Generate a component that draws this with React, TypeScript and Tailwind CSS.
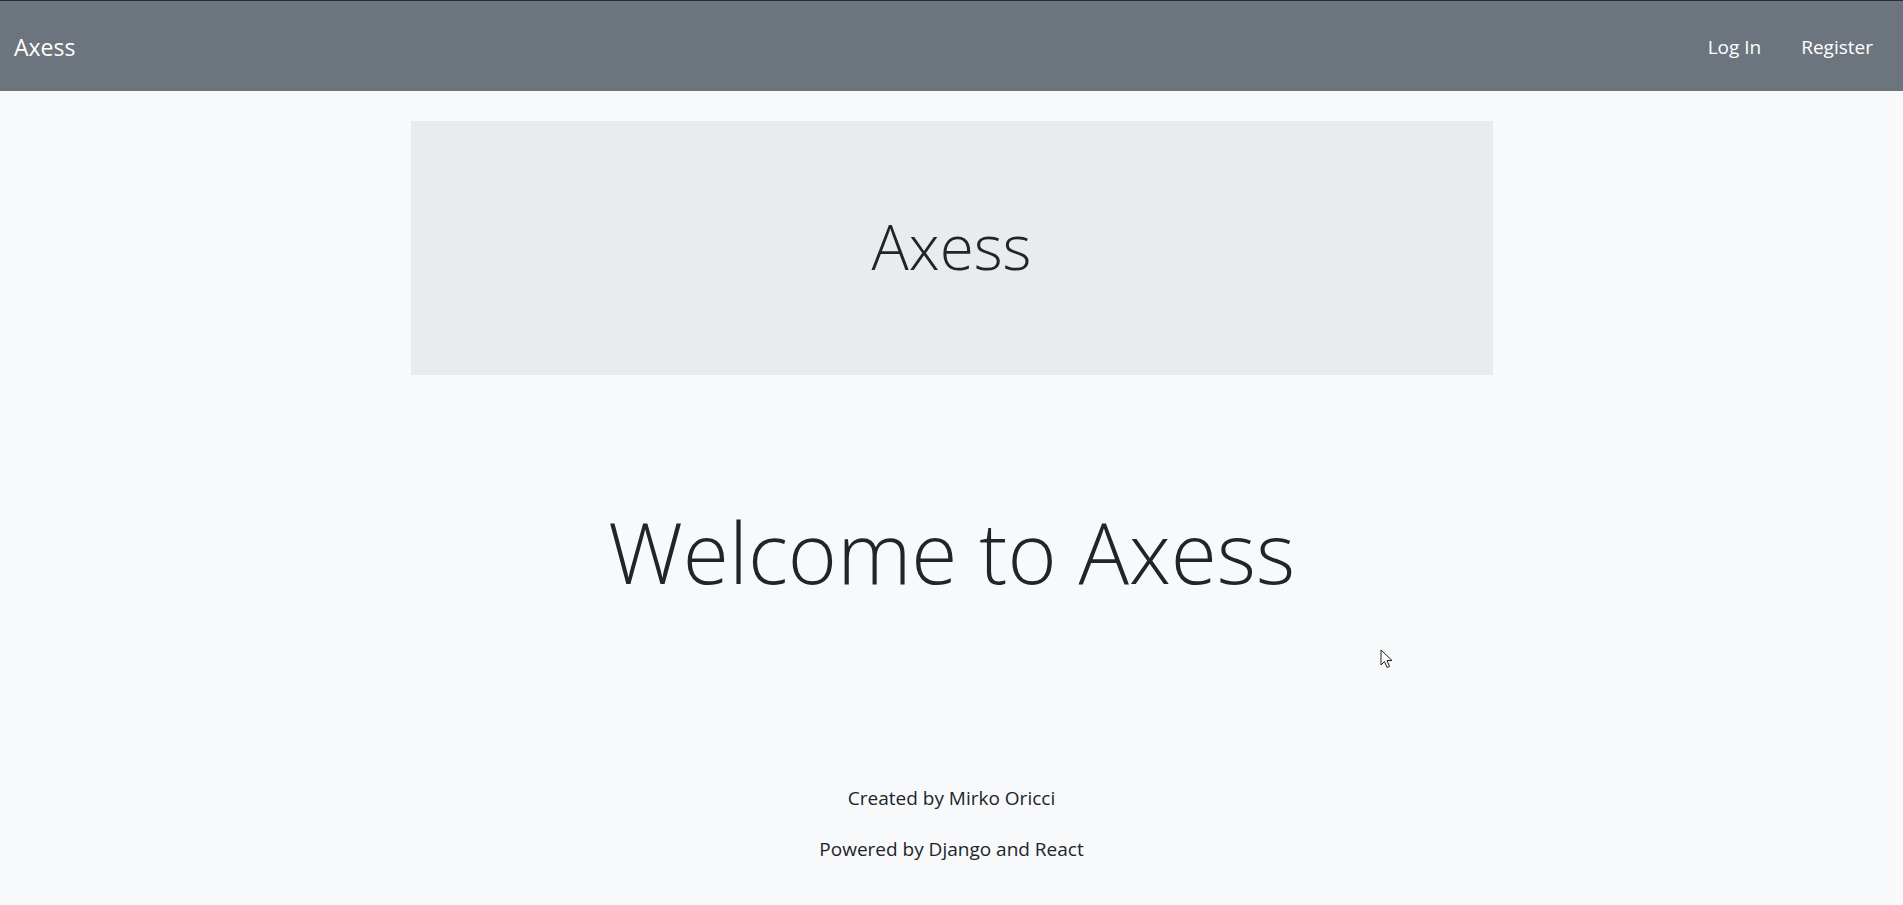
import React from 'react';

const font = { fontFamily: '"Open Sans", "Noto Sans", Arial, sans-serif' };

function Navbar() {
  return (
    <nav className="h-[91px] border-t border-[#2b2f33] bg-[#6c757d] flex items-center justify-between pl-[14px] pr-[30px]">
      <a className="text-[23px] text-white leading-none mt-[2px]">Axess</a>
      <div className="flex items-center gap-[40px] text-[19px] text-white mt-[2px]">
        <a>Log In</a>
        <a>Register</a>
      </div>
    </nav>
  );
}

// mouse pointer captured in the screenshot
function Cursor() {
  return (
    <svg className="absolute left-[1380px] top-[649px]" width="14" height="21" viewBox="0 0 14 21">
      <path d="M1 1 L1 16 L4.5 12.5 L7 18.5 L9.5 17.5 L7 11.5 L12 11.5 Z" fill="#fff" stroke="#222" strokeWidth="1" strokeLinejoin="round" />
    </svg>
  );
}

export default function App() {
  return (
    <div className="relative min-h-[905px] bg-[#f8f9fa] text-[#212529]" style={font}>
      <Navbar />
      <div className="mx-auto mt-[30px] w-[1082px] h-[254px] bg-[#e9ecef] flex items-center justify-center">
        <h1 className="text-[62px] font-light leading-[1.2] -mt-[4px]">Axess</h1>
      </div>
      <h2 className="mt-[127px] text-center text-[84px] font-light leading-[1.2]">Welcome to Axess</h2>
      <footer className="mt-[181px] text-center text-[19px] leading-[1.5]">
        <p className="mb-[23px]">Created by Mirko Oricci</p>
        <p>Powered by Django and React</p>
      </footer>
      <Cursor />
    </div>
  );
}
